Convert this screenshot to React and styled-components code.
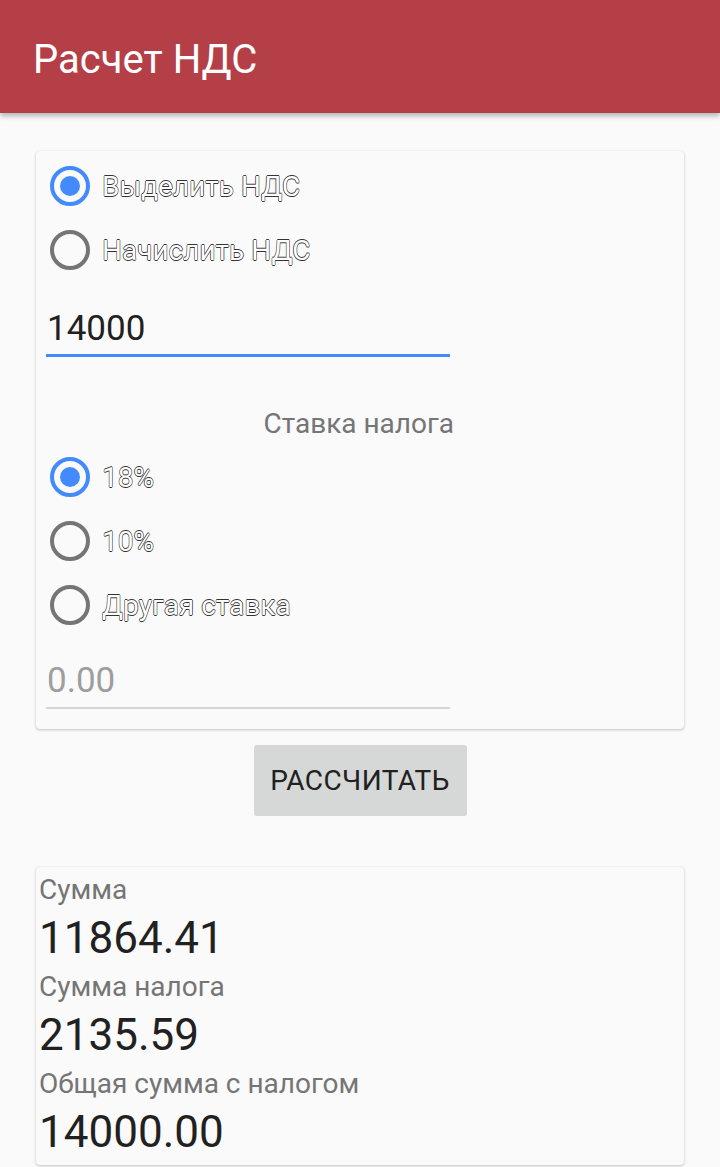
import React from "react";
import styled, { createGlobalStyle } from "styled-components";

const GlobalStyle = createGlobalStyle`
  html, body {
    margin: 0;
    padding: 0;
    background: #fafafa;
    font-family: Roboto, "Noto Sans", "Liberation Sans", sans-serif;
  }
`;

const Page = styled.div`
  width: 720px;
  min-height: 1167px;
  background: #fafafa;
  overflow: hidden;
`;

const AppBar = styled.header`
  height: 113px;
  background: #b53f47;
  display: flex;
  align-items: center;
  padding-left: 33px;
  box-shadow: 0 3px 5px rgba(0, 0, 0, 0.28);
  position: relative;
  z-index: 1;
`;

const Title = styled.h1`
  margin: 0;
  margin-top: 6px;
  font-size: 40px;
  font-weight: 400;
  color: #ffffff;
`;

const Content = styled.main`
  display: flex;
  flex-direction: column;
  align-items: center;
  padding: 38px 36px 0;
`;

const Card = styled.section`
  width: 100%;
  box-sizing: border-box;
  background: #fafafa;
  border-radius: 4px;
  box-shadow: 0 1px 3px rgba(0, 0, 0, 0.22), 0 0 1px rgba(0, 0, 0, 0.1);
  padding: ${(p) => p.$pad};
  display: flex;
  flex-direction: column;
`;

const RadioRow = styled.label`
  height: 64px;
  display: flex;
  align-items: center;
  padding-left: 14px;
  gap: 12px;
`;

const RadioCircle = styled.span`
  width: 40px;
  height: 40px;
  box-sizing: border-box;
  border-radius: 50%;
  border: 4.5px solid ${(p) => (p.$checked ? "#448aff" : "#757575")};
  display: flex;
  align-items: center;
  justify-content: center;
  flex: none;

  &::after {
    content: "";
    width: 20px;
    height: 20px;
    border-radius: 50%;
    background: #448aff;
    display: ${(p) => (p.$checked ? "block" : "none")};
  }
`;

const RadioText = styled.span`
  font-size: 28px;
  color: #ffffff;
  text-shadow: 0.6px 0 #333, -0.6px 0 #333, 0 0.6px #333, 0 -0.6px #333;
`;

const Field = styled.div`
  width: 404px;
  margin-left: 10px;
  height: ${(p) => p.$h}px;
  display: flex;
  align-items: flex-end;
  box-sizing: border-box;
  border-bottom: ${(p) => (p.$active ? "3px solid #448aff" : "2px solid #d6d6d6")};
  padding: 0 0 ${(p) => (p.$active ? 5 : 6)}px 1px;
  font-size: 35px;
  color: ${(p) => (p.$hint ? "#9e9e9e" : "#212121")};
`;

const SectionLabel = styled.div`
  width: 418px;
  text-align: right;
  font-size: 28px;
  color: #757575;
  margin-top: 50px;
  margin-bottom: 5px;
`;

const Button = styled.button`
  margin-top: 16px;
  width: 213px;
  height: 71px;
  border: none;
  border-radius: 3px;
  background: #d6d7d7;
  color: #212121;
  font-family: inherit;
  font-size: 28px;
  letter-spacing: 0.4px;
  padding: 0;
  margin-bottom: 51px;
`;

const ResultLabel = styled.div`
  font-size: 28px;
  color: #757575;
  line-height: 36px;
`;

const ResultValue = styled.div`
  font-size: 44px;
  color: #212121;
  line-height: 61px;
`;

const results = [
  ["Сумма", "11864.41"],
  ["Сумма налога", "2135.59"],
  ["Общая сумма с налогом", "14000.00"],
];

const Radio = ({ checked, children }) => (
  <RadioRow>
    <RadioCircle $checked={checked} />
    <RadioText>{children}</RadioText>
  </RadioRow>
);

export default function App() {
  return (
    <Page>
      <GlobalStyle />
      <AppBar>
        <Title>Расчет НДС</Title>
      </AppBar>
      <Content>
        <Card $pad="3px 0 20px">
          <Radio checked>Выделить НДС</Radio>
          <Radio>Начислить НДС</Radio>
          <Field $active $h={75}>14000</Field>
          <SectionLabel>Ставка налога</SectionLabel>
          <Radio checked>18%</Radio>
          <Radio>10%</Radio>
          <Radio>Другая ставка</Radio>
          <Field $hint $h={72}>0.00</Field>
        </Card>
        <Button>РАССЧИТАТЬ</Button>
        <Card $pad="5px 3px 2px">
          {results.map(([label, value]) => (
            <React.Fragment key={label}>
              <ResultLabel>{label}</ResultLabel>
              <ResultValue>{value}</ResultValue>
            </React.Fragment>
          ))}
        </Card>
      </Content>
    </Page>
  );
}
